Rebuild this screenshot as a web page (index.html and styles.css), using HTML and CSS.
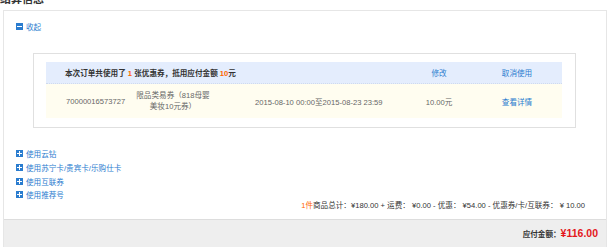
FILE: index.html
```html
<!DOCTYPE html>
<html lang="zh">
<head>
<meta charset="utf-8">
<title>结算信息</title>
<link rel="stylesheet" href="styles.css">
</head>
<body>
<div class="title">结算信息</div>
<div class="panel">
  <div class="toggle"><span class="ico minus"></span><a class="link">收起</a></div>
  <div class="coupon-box">
    <div class="c-head">
      <div class="c-summary">本次订单共使用了 <em>1</em> 张优惠券，抵用应付金额 <em>10</em>元</div>
      <div class="c-act"><a class="link">修改</a></div>
      <div class="c-act"><a class="link">取消使用</a></div>
    </div>
    <div class="c-row">
      <div class="c-no">70000016573727</div>
      <div class="c-name">限品类易券（818母婴美妆10元券）</div>
      <div class="c-date">2015-08-10 00:00至2015-08-23 23:59</div>
      <div class="c-amt">10.00元</div>
      <div class="c-act"><a class="link">查看详情</a></div>
    </div>
  </div>
  <ul class="opts">
    <li><span class="ico plus"></span><a class="link">使用云钻</a></li>
    <li><span class="ico plus"></span><a class="link">使用苏宁卡/贵宾卡/乐购仕卡</a></li>
    <li><span class="ico plus"></span><a class="link">使用互联券</a></li>
    <li><span class="ico plus"></span><a class="link">使用推荐号</a></li>
  </ul>
  <div class="totals"><em>1件</em>商品总计：¥180.00 + 运费： ¥0.00 - 优惠： ¥54.00 - 优惠券/卡/互联券： ¥ 10.00</div>
  <div class="pay"><span class="pay-label">应付金额：</span><span class="pay-num">¥116.00</span></div>
</div>
</body>
</html>
```

FILE: styles.css
```css
* { box-sizing: border-box; }
html, body { margin: 0; padding: 0; background: #fff; }
body {
  font-family: "Liberation Sans", Arial, "Noto Sans CJK SC", sans-serif;
  font-size: 7.6px;
  color: #555;
  width: 610px;
  height: 247px;
  overflow: hidden;
}
em { font-style: normal; color: #ff6600; }
.link { color: #2a7ccf; text-decoration: none; }

.title {
  font-size: 11px;
  line-height: 12px;
  height: 12px;
  font-weight: bold;
  color: #333;
  margin-top: -7px;
  margin-bottom: 5px;
}

.panel {
  margin-left: 3px;
  width: 604px;
  border: 1px solid #e6e6e6;
  border-bottom: none;
  padding-top: 10px;
}

.ico {
  display: inline-block;
  width: 7px;
  height: 7px;
  background: #2a7ccf;
  position: relative;
  margin-right: 3px;
  vertical-align: middle;
  flex: none;
}
.ico::before {
  content: "";
  position: absolute;
  left: 1px; top: 3px;
  width: 5px; height: 1px;
  background: #fff;
}
.ico.plus::after {
  content: "";
  position: absolute;
  left: 3px; top: 1px;
  width: 1px; height: 5px;
  background: #fff;
}

.toggle {
  display: flex;
  align-items: center;
  height: 10px;
  margin-left: 12px;
}

.coupon-box {
  margin: 22px 0 0 29px;
  width: 543px;
  border: 1px solid #e0e0e0;
  padding: 8px 13px 9px 12px;
}
.c-head, .c-row {
  display: grid;
  grid-template-columns: 88px 78px 188px 78px 78px;
  align-items: center;
}
.c-head {
  height: 22px;
  background: #e4edfd;
  border-bottom: 1px dotted #cfdaee;
}
.c-summary {
  grid-column: 1 / 4;
  padding-left: 19px;
  font-weight: bold;
  color: #333;
}
.c-row {
  height: 34px;
  background: #fffdf0;
  color: #666;
}
.c-act, .c-amt { text-align: center; }
.c-no { padding-left: 20px; }
.c-name { text-align: center; line-height: 11px; }
.c-date { padding-left: 43px; white-space: nowrap; }

.opts {
  list-style: none;
  margin: 19px 0 0 12px;
  padding: 0;
}
.opts li {
  display: flex;
  align-items: center;
  height: 13.7px;
}

.totals {
  text-align: right;
  padding-right: 21px;
  line-height: 10px;
  margin-top: -1px;
  color: #333;
  white-space: nowrap;
}

.pay {
  margin-top: 8px;
  background: #eeeeee;
  border-top: 1px solid #dddddd;
  height: 29px;
  padding: 7px 8px 0 0;
  display: flex;
  justify-content: flex-end;
  align-items: baseline;
}
.pay-label { font-weight: bold; color: #333; font-size: 7.6px; }
.pay-num { font-weight: bold; color: #e4161c; font-size: 10.5px; }
```
